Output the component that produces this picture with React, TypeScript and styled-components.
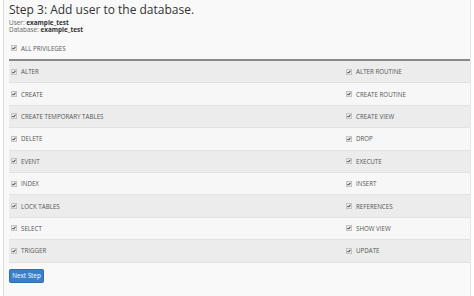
import * as React from 'react';
import styled, { createGlobalStyle } from 'styled-components';

const GlobalStyle = createGlobalStyle`
  html, body {
    margin: 0;
    padding: 0;
    background: #ffffff;
    font-family: "Open Sans", "Liberation Sans", sans-serif;
    color: #333333;
  }
`;

const left = [
  'ALTER',
  'CREATE',
  'CREATE TEMPORARY TABLES',
  'DELETE',
  'EVENT',
  'INDEX',
  'LOCK TABLES',
  'SELECT',
  'TRIGGER',
];

const right = [
  'ALTER ROUTINE',
  'CREATE ROUTINE',
  'CREATE VIEW',
  'DROP',
  'EXECUTE',
  'INSERT',
  'REFERENCES',
  'SHOW VIEW',
  'UPDATE',
];

function Check() {
  return (
    <Box>
      <svg width="4" height="4" viewBox="0 0 8 8">
        <path d="M1 4.2 L3 6.2 L7 1.5" fill="none" stroke="#222" strokeWidth="2" />
      </svg>
    </Box>
  );
}

export default function App() {
  return (
    <>
      <GlobalStyle />
      <Page>
        <Title>Step 3: Add user to the database.</Title>
        <Meta>
          <div>
            User: <b>example_test</b>
          </div>
          <div>
            Database: <b>example_test</b>
          </div>
        </Meta>
        <AllRow>
          <Check />
          <Label>ALL PRIVILEGES</Label>
        </AllRow>
        <Table>
          {left.map((name, i) => (
            <Row key={name} striped={i % 2 === 0}>
              <Cell>
                <Check />
                <Label>{name}</Label>
              </Cell>
              <Cell>
                <Check />
                <Label>{right[i]}</Label>
              </Cell>
            </Row>
          ))}
        </Table>
        <Button>Next Step</Button>
      </Page>
    </>
  );
}

const Page = styled.div`
  margin-left: 3px;
  width: 468px;
  height: 296px;
  box-sizing: border-box;
  border-left: 1px solid #dcdcdc;
  border-right: 1px solid #e6e6e6;
  background: #f9f9f9;
  padding: 0 0 0 5px;
  overflow: hidden;
`;

const Title = styled.h1`
  margin: 0;
  padding-top: 2px;
  font-size: 12px;
  line-height: 15px;
  font-weight: 400;
  color: #333;
`;

const Meta = styled.div`
  margin-top: 1.5px;
  font-size: 6.4px;
  line-height: 7.5px;
  color: #666;
  b {
    font-weight: 700;
    color: #333;
  }
`;

const AllRow = styled.div`
  display: flex;
  align-items: center;
  height: 12px;
  padding-left: 2px;
  margin-top: 8.5px;
`;

const Box = styled.span`
  display: inline-flex;
  align-items: center;
  justify-content: center;
  width: 4px;
  height: 4px;
  border: 0.5px solid #c4c4c4;
  background: #e8e8e8;
  margin-right: 4px;
`;

const Label = styled.span`
  font-size: 6.2px;
  line-height: 7px;
  color: #555;
`;

const Table = styled.div`
  margin-top: 5px;
  width: 462px;
  border-top: 2px solid #8a8a8a;
`;

const Row = styled.div<{ striped: boolean }>`
  display: grid;
  grid-template-columns: 335px 1fr;
  height: 22.4px;
  align-items: center;
  background: ${(p) => (p.striped ? '#ececec' : '#f7f7f7')};
  border-bottom: 0.5px solid #e2e2e2;
  box-sizing: border-box;
`;

const Cell = styled.div`
  display: flex;
  align-items: center;
  padding-left: 2px;
`;

const Button = styled.button`
  display: block;
  margin-top: 6px;
  width: 35px;
  height: 14px;
  padding: 0;
  border: 1px solid #2d6fb5;
  border-radius: 1.5px;
  background: #3a7fcc;
  color: #fff;
  font-family: "Open Sans", "Liberation Sans", sans-serif;
  font-size: 6.3px;
`;
